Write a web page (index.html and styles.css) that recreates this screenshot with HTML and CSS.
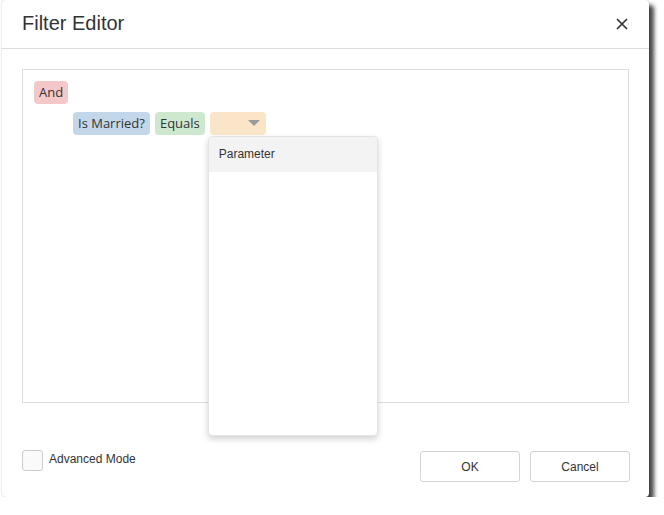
FILE: index.html
```html
<!DOCTYPE html>
<html>
<head>
<meta charset="utf-8">
<link rel="stylesheet" href="styles.css">
</head>
<body>
<div class="dialog">
  <div class="header">
    <div class="title">Filter Editor</div>
    <svg class="close" width="14" height="14" viewBox="0 0 14 14"><path d="M2 2L12 12M12 2L2 12" stroke="#333" stroke-width="1.7"/></svg>
  </div>
  <div class="body">
    <div class="panel">
      <div class="row"><span class="chip and">And</span></div>
      <div class="row indent">
        <span class="chip field">Is Married?</span>
        <span class="chip op">Equals</span>
        <span class="chip value">
          <svg class="caret" width="12" height="6" viewBox="0 0 12 6"><path d="M0 0H12L6 6Z" fill="#9a9a9a"/></svg>
          <div class="dropdown">
            <div class="item active">Parameter</div>
          </div>
        </span>
      </div>
    </div>
  </div>
  <div class="footer">
    <label class="check"><span class="box"></span><span class="label">Advanced Mode</span></label>
    <div class="buttons">
      <button class="btn">OK</button>
      <button class="btn">Cancel</button>
    </div>
  </div>
</div>
</body>
</html>
```
FILE: styles.css
```css
html, body { margin: 0; padding: 0; background: #fff; }
body { font-family: "Liberation Sans", Arial, sans-serif; color: #333; }
.dialog {
  margin-left: 2px;
  width: 647px;
  height: 497px;
  background: #fff;
  border-radius: 4px;
  box-shadow: 0 0 2px rgba(0,0,0,0.25), 5px 5px 4px rgba(0,0,0,0.72);
  display: flex;
  flex-direction: column;
}
.header {
  height: 48px;
  border-bottom: 1px solid #ddd;
  display: flex;
  align-items: center;
  justify-content: space-between;
  padding: 0 20px;
}
.title { font-size: 20px; color: #333; margin-top: -2px; }
.close { margin-right: 0px; margin-top: -1px; }
.body { padding: 20px 20px 0 20px; }
.panel {
  border: 1px solid #ddd;
  padding: 11px 11px;
  box-sizing: content-box;
  height: 310px;
}
.row { display: flex; gap: 5px; height: 23px; margin-bottom: 8px; }
.indent { padding-left: 39px; }
.chip {
  font-family: "Open Sans", "Segoe UI", sans-serif;
  font-size: 13px;
  line-height: 23px;
  height: 23px;
  padding: 0 5px;
  border-radius: 4px;
  color: #333;
  position: relative;
}
.and { background: #f4c7c9; }
.field { background: #c3d7ea; }
.op { background: #cde8cf; }
.value { background: #fae5c8; width: 46px; }
.caret { position: absolute; right: 6px; top: 8px; }
.dropdown {
  position: absolute;
  left: -2px;
  top: 24px;
  width: 168px;
  height: 298px;
  background: #fff;
  border: 1px solid #e4e4e4;
  border-radius: 4px;
  box-shadow: 0 3px 6px rgba(0,0,0,0.18);
  z-index: 2;
  overflow: hidden;
}
.item {
  font-family: "Liberation Sans", Arial, sans-serif;
  font-size: 12px;
  height: 35px;
  line-height: 35px;
  padding-left: 10px;
  color: #333;
}
.item.active { background: #f3f3f3; }
.footer {
  display: flex;
  justify-content: space-between;
  padding: 47px 19px 0 20px;
}
.check { display: flex; align-items: flex-start; gap: 6px; }
.box {
  width: 19px; height: 19px;
  border: 1px solid #ccc;
  border-radius: 3px;
  background: #fafafa;
}
.label { font-size: 12px; line-height: 18px; color: #333; }
.buttons { display: flex; gap: 10px; padding-top: 1px; }
.btn {
  width: 100px;
  height: 31px;
  background: #fff;
  border: 1px solid #d4d4d4;
  border-radius: 3px;
  font-family: "Liberation Sans", Arial, sans-serif;
  font-size: 12px;
  color: #333;
  padding: 0;
}
```
